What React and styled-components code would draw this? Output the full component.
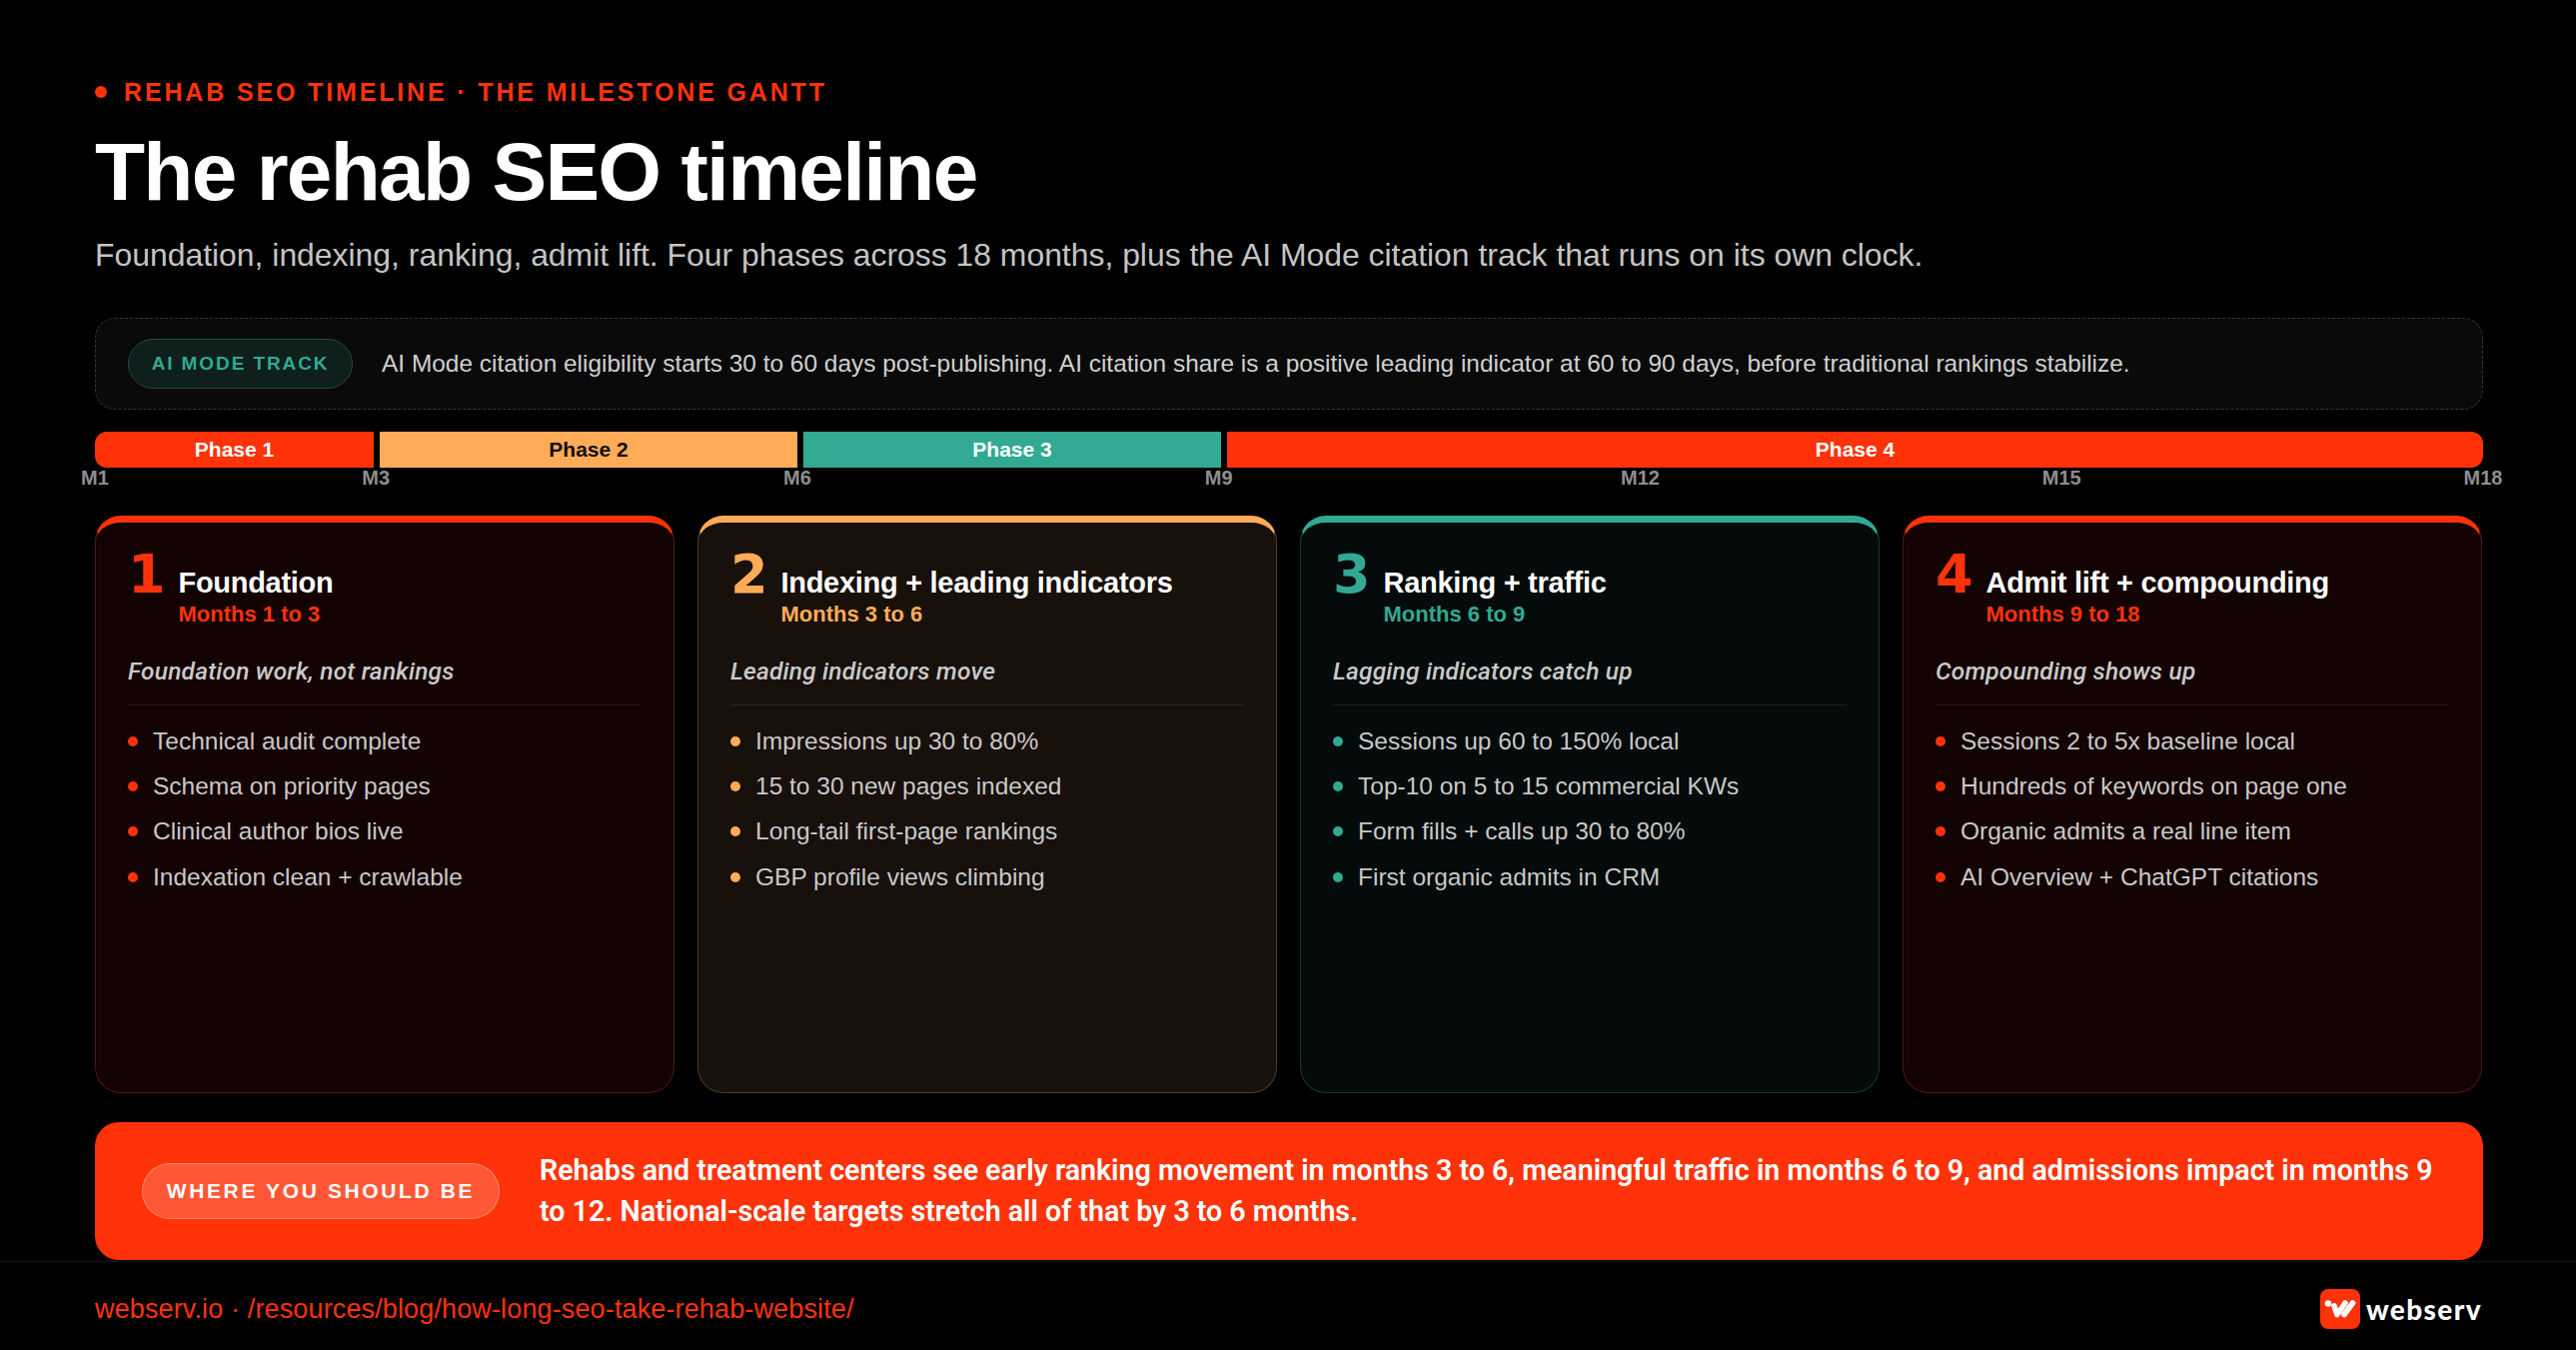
import React from "react";
import styled, { createGlobalStyle } from "styled-components";

const RED = "#ff3209";
const ORANGE = "#ffab57";
const TEAL = "#31a993";

const Global = createGlobalStyle`
  html, body { margin: 0; padding: 0; background: #000; }
  body { font-family: "Liberation Sans", Arial, sans-serif; color: #fff; }
  * { box-sizing: border-box; }
`;

const Page = styled.div`
  width: 2578px;
  height: 1351px;
  background: #000;
  display: flex;
  flex-direction: column;
  overflow: hidden;
`;

const Main = styled.main`
  padding: 77px 93px 0 95px;
  display: flex;
  flex-direction: column;
`;

const Eyebrow = styled.div`
  display: flex;
  align-items: center;
  gap: 17px;
  height: 30px;
  color: ${RED};
  font-size: 25px;
  line-height: 30px;
  font-weight: 700;
  letter-spacing: 0.114em;
`;

const Dot = styled.span`
  width: 12px;
  height: 12px;
  border-radius: 50%;
  background: ${RED};
`;

const Title = styled.h1`
  margin: 20px 0 0;
  font-size: 82px;
  line-height: 90px;
  font-weight: 700;
  letter-spacing: -0.021em;
  color: #fff;
`;

const Subtitle = styled.p`
  margin: 18px 0 0;
  font-size: 31.9px;
  line-height: 40px;
  color: #c4c4c4;
`;

const TrackBox = styled.section`
  margin-top: 43px;
  height: 92px;
  display: flex;
  align-items: center;
  gap: 29px;
  padding: 0 32px;
  background: #0a0a0a;
  border: 1px dashed #363636;
  border-radius: 20px;
`;

const TrackPill = styled.span`
  flex: none;
  display: flex;
  align-items: center;
  justify-content: center;
  width: 225px;
  height: 50px;
  border-radius: 25px;
  background: #0e1f1c;
  border: 1.5px solid #1f4a42;
  color: ${TEAL};
  font-size: 19px;
  font-weight: 700;
  letter-spacing: 0.1em;
`;

const TrackText = styled.p`
  margin: 0;
  font-size: 24.45px;
  line-height: 32px;
  color: #d0d0d0;
  white-space: nowrap;
`;

const Gantt = styled.div`
  margin-top: 22px;
  height: 36px;
  display: grid;
  grid-template-columns: 279px 418px 418px 1fr;
  gap: 6px;
`;

const Bar = styled.div`
  display: flex;
  align-items: center;
  justify-content: center;
  background: ${(p) => p.$bg};
  color: ${(p) => p.$fg};
  font-size: 21px;
  font-weight: 700;
  border-radius: ${(p) => p.$radius};
`;

const Ticks = styled.div`
  display: flex;
  height: 20px;
`;

const Tick = styled.span`
  flex: ${(p) => p.$span} 0 0;
  width: 0;
  font-size: 20px;
  line-height: 20px;
  font-weight: 700;
  color: #8e8e8e;
  white-space: nowrap;
`;

const TickLabel = styled.span`
  display: inline-block;
  transform: translateX(-50%);
`;

const Cards = styled.div`
  margin: 28px 1px 0 0;
  height: 578px;
  display: grid;
  grid-template-columns: repeat(4, 1fr);
  gap: 23px;
`;

const Card = styled.article`
  display: flex;
  flex-direction: column;
  padding: 25px 32px 0;
  background: ${(p) => p.$bg};
  border: 1px solid ${(p) => p.$line};
  border-top: 7px solid ${(p) => p.$accent};
  border-radius: 26px;
`;

const CardHead = styled.header`
  display: flex;
  align-items: flex-start;
  gap: 14.5px;
  height: 85px;
`;

const Num = styled.span`
  width: 36px;
  padding-top: 1px;
  font-family: "DejaVu Sans", sans-serif;
  font-size: 54px;
  line-height: 52px;
  font-weight: 700;
  color: ${(p) => p.$accent};
`;

const HeadText = styled.div`
  display: flex;
  flex-direction: column;
  padding-top: 18px;
`;

const CardTitle = styled.h2`
  margin: 0;
  font-size: 29px;
  line-height: 34px;
  font-weight: 700;
  letter-spacing: -0.01em;
  color: #fff;
`;

const Months = styled.span`
  font-size: 22px;
  line-height: 30px;
  font-weight: 700;
  color: ${(p) => p.$accent};
`;

const Lead = styled.p`
  margin: 24px 0 0;
  padding-bottom: 18px;
  border-bottom: 1px solid rgba(255, 255, 255, 0.09);
  font-family: Roboto, "Liberation Sans", sans-serif;
  font-size: 24.5px;
  line-height: 30px;
  font-style: italic;
  font-weight: 500;
  letter-spacing: 0.008em;
  color: #c9c9c9;
`;

const List = styled.ul`
  margin: 13px 0 0;
  padding: 0;
  list-style: none;
  display: flex;
  flex-direction: column;
`;

const Item = styled.li`
  display: flex;
  align-items: center;
  gap: 15px;
  height: 45.4px;
  font-size: 24.5px;
  color: #c8c8c8;
`;

const Bullet = styled.span`
  flex: none;
  width: 10px;
  height: 10px;
  border-radius: 50%;
  background: ${(p) => p.$accent};
`;

const Banner = styled.section`
  margin-top: 29px;
  height: 138px;
  display: flex;
  align-items: center;
  gap: 40px;
  padding: 0 36px 0 47px;
  background: ${RED};
  border-radius: 24px;
`;

const BannerPill = styled.span`
  flex: none;
  display: flex;
  align-items: center;
  justify-content: center;
  width: 358px;
  height: 56px;
  border-radius: 28px;
  background: rgba(255, 255, 255, 0.18);
  border: 1.5px solid rgba(255, 255, 255, 0.28);
  color: #fff;
  font-size: 21px;
  font-weight: 700;
  letter-spacing: 0.125em;
`;

const BannerText = styled.p`
  margin: 0;
  font-family: Roboto, "Liberation Sans", sans-serif;
  font-size: 28.6px;
  line-height: 41px;
  font-weight: 600;
  color: #fff;
`;

const Footer = styled.footer`
  flex: 1;
  display: flex;
  align-items: center;
  justify-content: space-between;
  margin-top: 1px;
  padding: 6px 94px 0 95px;
  border-top: 1px solid #141414;
`;

const FooterLink = styled.span`
  font-size: 27px;
  font-weight: 400;
  letter-spacing: 0.005em;
  color: ${RED};
`;

const Brand = styled.div`
  display: flex;
  align-items: center;
  gap: 6px;
`;

const BrandName = styled.span`
  font-family: Lato, "Open Sans", sans-serif;
  font-size: 28px;
  font-weight: 900;
  letter-spacing: 0.05em;
  color: #fff;
`;

const phases = [
  {
    n: 1, title: "Foundation", months: "Months 1 to 3", lead: "Foundation work, not rankings",
    accent: RED, bg: "#130302", line: "#4a1a10",
    items: ["Technical audit complete", "Schema on priority pages", "Clinical author bios live", "Indexation clean + crawlable"],
  },
  {
    n: 2, title: "Indexing + leading indicators", months: "Months 3 to 6", lead: "Leading indicators move",
    accent: ORANGE, bg: "#18100b", line: "#4d3a28",
    items: ["Impressions up 30 to 80%", "15 to 30 new pages indexed", "Long-tail first-page rankings", "GBP profile views climbing"],
  },
  {
    n: 3, title: "Ranking + traffic", months: "Months 6 to 9", lead: "Lagging indicators catch up",
    accent: TEAL, bg: "#040b0a", line: "#123a33",
    items: ["Sessions up 60 to 150% local", "Top-10 on 5 to 15 commercial KWs", "Form fills + calls up 30 to 80%", "First organic admits in CRM"],
  },
  {
    n: 4, title: "Admit lift + compounding", months: "Months 9 to 18", lead: "Compounding shows up",
    accent: RED, bg: "#130302", line: "#4a1a10",
    items: ["Sessions 2 to 5x baseline local", "Hundreds of keywords on page one", "Organic admits a real line item", "AI Overview + ChatGPT citations"],
  },
];

const bars = [
  { label: "Phase 1", bg: RED, fg: "#fff", radius: "12px 0 0 12px" },
  { label: "Phase 2", bg: ORANGE, fg: "#111", radius: "0" },
  { label: "Phase 3", bg: TEAL, fg: "#fff", radius: "0" },
  { label: "Phase 4", bg: RED, fg: "#fff", radius: "0 12px 12px 0" },
];

const ticks = [
  ["M1", 2], ["M3", 3], ["M6", 3], ["M9", 3], ["M12", 3], ["M15", 3], ["M18", 0],
];

const Logo = () => (
  <svg width="40" height="40" viewBox="0 0 40 40" aria-hidden="true">
    <rect width="40" height="40" rx="8" fill={RED} />
    <circle cx="8" cy="14.5" r="3.3" fill="#fff" />
    <g stroke="#fff" strokeWidth="5.6" strokeLinecap="round" strokeLinejoin="round" fill="none">
      <path d="M14 17 L17 25.5 L25 14" />
      <path d="M24 25.5 L32.5 14" />
    </g>
  </svg>
);

export default function App() {
  return (
    <>
      <Global />
      <Page>
        <Main>
          <Eyebrow>
            <Dot />
            REHAB SEO TIMELINE · THE MILESTONE GANTT
          </Eyebrow>
          <Title>The rehab SEO timeline</Title>
          <Subtitle>
            Foundation, indexing, ranking, admit lift. Four phases across 18 months, plus the AI Mode citation track that runs on its own clock.
          </Subtitle>
          <TrackBox>
            <TrackPill>AI MODE TRACK</TrackPill>
            <TrackText>
              AI Mode citation eligibility starts 30 to 60 days post-publishing. AI citation share is a positive leading indicator at 60 to 90 days, before traditional rankings stabilize.
            </TrackText>
          </TrackBox>
          <Gantt>
            {bars.map((b) => (
              <Bar key={b.label} $bg={b.bg} $fg={b.fg} $radius={b.radius}>{b.label}</Bar>
            ))}
          </Gantt>
          <Ticks>
            {ticks.map(([label, span]) => (
              <Tick key={label} $span={span}><TickLabel>{label}</TickLabel></Tick>
            ))}
          </Ticks>
          <Cards>
            {phases.map((p) => (
              <Card key={p.n} $accent={p.accent} $bg={p.bg} $line={p.line}>
                <CardHead>
                  <Num $accent={p.accent}>{p.n}</Num>
                  <HeadText>
                    <CardTitle>{p.title}</CardTitle>
                    <Months $accent={p.accent}>{p.months}</Months>
                  </HeadText>
                </CardHead>
                <Lead>{p.lead}</Lead>
                <List>
                  {p.items.map((it) => (
                    <Item key={it}><Bullet $accent={p.accent} />{it}</Item>
                  ))}
                </List>
              </Card>
            ))}
          </Cards>
          <Banner>
            <BannerPill>WHERE YOU SHOULD BE</BannerPill>
            <BannerText>
              Rehabs and treatment centers see early ranking movement in months 3 to 6, meaningful traffic in months 6 to 9, and admissions impact in months 9 to 12. National-scale targets stretch all of that by 3 to 6 months.
            </BannerText>
          </Banner>
        </Main>
        <Footer>
          <FooterLink>webserv.io · /resources/blog/how-long-seo-take-rehab-website/</FooterLink>
          <Brand>
            <Logo />
            <BrandName>webserv</BrandName>
          </Brand>
        </Footer>
      </Page>
    </>
  );
}
